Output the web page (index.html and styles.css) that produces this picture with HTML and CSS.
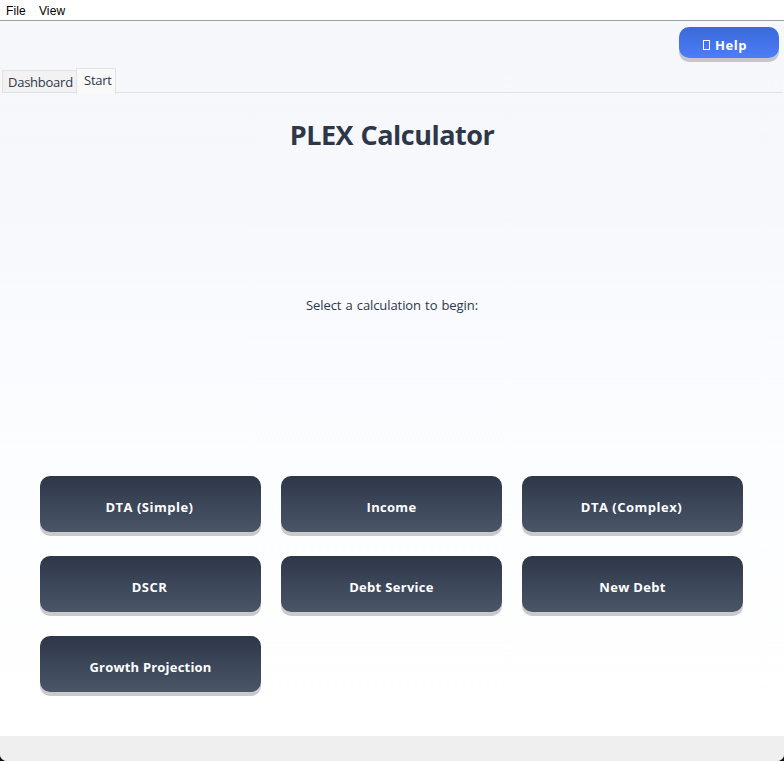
FILE: index.html
```html
<!DOCTYPE html>
<html lang="en">
<head>
<meta charset="utf-8">
<title>PLEX Calculator</title>
<link rel="stylesheet" href="styles.css">
</head>
<body>
<div class="window">
  <nav class="menubar"><span class="menu-file">File</span><span>View</span></nav>
  <main class="content">
    <div class="toolbar"><button class="help"><i class="glyph"></i><span>Help</span></button></div>
    <div class="tabs">
      <div class="tab">Dashboard</div>
      <div class="tab active">Start</div>
      <div class="tab-line"></div>
    </div>
    <h1 class="title"><span>PLEX Calculator</span></h1>
    <p class="prompt"><span>Select a calculation to begin:</span></p>
    <div class="grid">
      <button class="calc">DTA (Simple)</button>
      <button class="calc snug">Income</button>
      <button class="calc">DTA (Complex)</button>
      <button class="calc">DSCR</button>
      <button class="calc snug">Debt Service</button>
      <button class="calc snug">New Debt</button>
      <button class="calc tight">Growth Projection</button>
    </div>
  </main>
  <footer class="statusbar"></footer>
</div>
</body>
</html>
```
FILE: styles.css
```css
* { box-sizing: border-box; }
body { margin: 0; background: #111; font-family: "Open Sans", "Noto Sans", sans-serif; color: #2d3748; }
button { border: 0; padding: 0; margin: 0; font-family: inherit; color: #fff; }
.window { height: 761px; display: flex; flex-direction: column; overflow: hidden; border-radius: 0 0 7px 7px; background: #efefef; }
.menubar { height: 21px; flex: none; display: flex; gap: 13px; padding: 1px 0 0 6px; background: #fff; border-bottom: 1px solid #a0a0a0; font: 12px/21px "Liberation Sans", sans-serif; letter-spacing: 0.15px; color: #000; }
.content { height: 715px; flex: none; display: flex; flex-direction: column; background: linear-gradient(#f5f7fb, #f7f8fc 25%, #fcfdff 62%, #fff); }
.toolbar { height: 47px; display: flex; justify-content: flex-end; padding: 6px 5px 0 0; }
.help { width: 100px; height: 31px; display: flex; align-items: center; justify-content: center; gap: 5px; padding: 5px 8px 0 0; border-radius: 10px; background: linear-gradient(#3a69d8, #4d7df8); box-shadow: 0 4px 0 #c6c7ca; font-size: 13px; font-weight: 700; letter-spacing: 0.5px; line-height: 18px; }
.glyph { width: 7px; height: 10px; border: 1px solid #fff; }
.tabs { height: 26px; display: flex; align-items: flex-start; padding: 0 1px 0 2px; font-size: 13px; line-height: 18px; letter-spacing: -0.25px; }
.tab { width: 74px; height: 23px; margin-top: 2px; padding: 2px 0 0 5px; background: #f2f2f2; border: 1px solid #e2e2e2; border-right: 0; white-space: nowrap; }
.tab.active { width: 40px; height: 26px; margin-top: 0; padding: 2px 0 0 7px; background: #f9f9f9; border-right: 1px solid #e2e2e2; border-bottom: 0; }
.tab-line { flex: 1; height: 1px; margin-top: 24px; background: #e2e2e2; }
.title { height: 84px; margin: 0; text-align: center; font-size: 27px; font-weight: 700; line-height: 82px; letter-spacing: -0.5px; word-spacing: 1px; }
.prompt { height: 254px; margin: 0; text-align: center; font-size: 13px; line-height: 254px; letter-spacing: -0.08px; word-spacing: 0.8px; }
.grid { margin: 44px 41px 0 40px; display: grid; grid-template-columns: repeat(3, 221px); grid-auto-rows: 56px; gap: 24px 20px; }
.calc { padding: 6px 2px 0 0; border-radius: 10px; background: linear-gradient(#2d3748, #4a5568); box-shadow: 0 4px 0 #cac9cb; font-size: 13px; font-weight: 700; letter-spacing: 0.5px; }
.calc.snug { padding-right: 0; letter-spacing: 0.3px; }
.calc.tight { padding-right: 0; letter-spacing: 0.2px; }
.statusbar { flex: 1; background: #efefef; }
```
